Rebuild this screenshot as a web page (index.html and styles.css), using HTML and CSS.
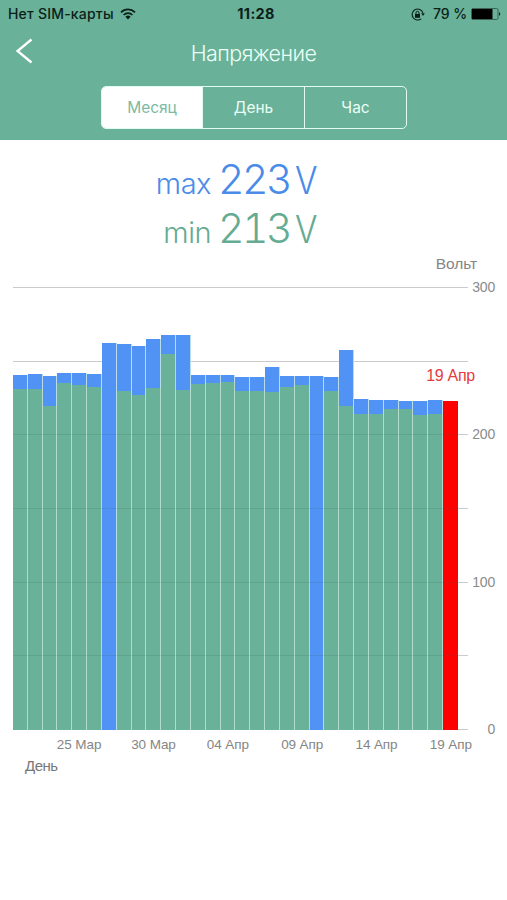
FILE: index.html
```html
<!DOCTYPE html>
<html lang="ru">
<head>
<meta charset="utf-8">
<title>Напряжение</title>
<link rel="stylesheet" href="styles.css">
</head>
<body>
<header class="header">
  <div class="status">
    <div class="carrier"><span>Нет SIM-карты</span>
      <svg width="16" height="12" viewBox="0 0 16 12"><g fill="none" stroke="#0b1f18" stroke-width="1.7"><path d="M1 4.3a10 10 0 0 1 14 0"/><path d="M3.6 7a6.3 6.3 0 0 1 8.8 0"/></g><path d="M5.4 8.7a3.8 3.8 0 0 1 5.2 0L8 11.4z" fill="#0b1f18"/></svg>
    </div>
    <div class="clock">11:28</div>
    <div class="power">
      <svg width="14" height="13" viewBox="0 0 14 13"><path d="M11.9 4.8A5.5 5.5 0 1 0 10.2 10.8" fill="none" stroke="#0b1f18" stroke-width="1.1"/><path d="M10.2 5.2h3.6L12 8z" fill="#0b1f18"/><path d="M4 6h5v3.8H4z" fill="#0b1f18"/><path d="M5 6V4.8a1.5 1.5 0 0 1 3 0V6" fill="none" stroke="#0b1f18"/></svg>
      <span>79 %</span>
      <svg width="31" height="12" viewBox="0 0 31 12"><rect x=".5" y=".5" width="26.5" height="11" rx="1.5" fill="none" stroke="#2c5144" stroke-width=".8"/><path d="M1 1h20.500v10H1z"/><path d="M28.200 4q2 2 0 4z"/></svg>
    </div>
  </div>
  <div class="navbar">
    <svg width="18" height="26" viewBox="0 0 18 26"><path d="M15.500 1.500L1.500 13l14 11.500" fill="none" stroke="#fff" stroke-width="2.300"/></svg>
    <h1 class="title">Напряжение</h1>
  </div>
  <div class="segments">
    <div class="segment active">Месяц</div>
    <div class="segment">День</div>
    <div class="segment">Час</div>
  </div>
</header>
<main>
  <div class="readings">
    <div class="reading max"><span class="name">max</span><span class="value">223</span><span class="unit">V</span></div>
    <div class="reading min"><span class="name">min</span><span class="value">213</span><span class="unit">V</span></div>
  </div>
  <div class="axis-title">Вольт</div>
  <div class="chart">
    <div class="grid"><i></i><i></i><i></i><i></i><i></i><i></i><i></i></div>
    <div class="bars">
      <div class="bar" style="height:355.5px"><b style="height:341px"></b></div>
      <div class="bar" style="height:356px"><b style="height:341px"></b></div>
      <div class="bar" style="height:354px"><b style="height:324px"></b></div>
      <div class="bar" style="height:357.5px"><b style="height:347.5px"></b></div>
      <div class="bar" style="height:357.5px"><b style="height:345px"></b></div>
      <div class="bar" style="height:356px"><b style="height:343.5px"></b></div>
      <div class="bar" style="height:387.5px"></div>
      <div class="bar" style="height:386.5px"><b style="height:339.5px"></b></div>
      <div class="bar" style="height:384px"><b style="height:335.5px"></b></div>
      <div class="bar" style="height:391px"><b style="height:342px"></b></div>
      <div class="bar" style="height:395.5px"><b style="height:376px"></b></div>
      <div class="bar" style="height:395px"><b style="height:340px"></b></div>
      <div class="bar" style="height:355px"><b style="height:346px"></b></div>
      <div class="bar" style="height:355px"><b style="height:347px"></b></div>
      <div class="bar" style="height:355px"><b style="height:348.5px"></b></div>
      <div class="bar" style="height:353px"><b style="height:339px"></b></div>
      <div class="bar" style="height:353px"><b style="height:339.5px"></b></div>
      <div class="bar" style="height:363px"><b style="height:338.5px"></b></div>
      <div class="bar" style="height:354px"><b style="height:343.5px"></b></div>
      <div class="bar" style="height:354px"><b style="height:345px"></b></div>
      <div class="bar" style="height:354.5px"></div>
      <div class="bar" style="height:353.5px"><b style="height:339.5px"></b></div>
      <div class="bar" style="height:380px"><b style="height:324px"></b></div>
      <div class="bar" style="height:331.5px"><b style="height:316px"></b></div>
      <div class="bar" style="height:330.5px"><b style="height:316px"></b></div>
      <div class="bar" style="height:330.5px"><b style="height:321px"></b></div>
      <div class="bar" style="height:329.5px"><b style="height:321px"></b></div>
      <div class="bar" style="height:329.5px"><b style="height:315.5px"></b></div>
      <div class="bar" style="height:330.5px"><b style="height:316.5px"></b></div>
      <div class="bar today" style="height:329px"><span class="flag">19 Апр</span></div>
    </div>
    <div class="grid over"><i></i><i></i><i></i><i></i><i></i><i></i><i></i></div>
    <div class="scale"><span>300</span><span>200</span><span>100</span><span>0</span></div>
  </div>
  <div class="dates"><span>25 Мар</span><span>30 Мар</span><span>04 Апр</span><span>09 Апр</span><span>14 Апр</span><span>19 Апр</span></div>
  <div class="day">День</div>
</main>
</body>
</html>
```

FILE: styles.css
```css
* { box-sizing: border-box; }
body { margin: 0; height: 900px; overflow: hidden; background: #fff; font-family: Inter, "Liberation Sans", sans-serif; }
svg { display: block; flex: none; }
.header { height: 140px; background: #69b199; }
.status { height: 28px; padding: 0 5px 0 8px; display: grid; grid-template-columns: 1fr auto 1fr; align-items: center; color: #0b1f18; font-size: 14px; line-height: 28px; white-space: nowrap; }
.carrier, .power { display: flex; align-items: center; }
.carrier { gap: 6px; letter-spacing: .2px; font-weight: 450; }
.clock { font-weight: 700; font-size: 14.5px; letter-spacing: .3px; padding-left: 2px; }
.power { justify-content: flex-end; gap: 4px; }
.power span { margin-left: 4px; letter-spacing: -.1px; font-weight: 450; }
.navbar { height: 58px; padding: 0 16px; display: grid; grid-template-columns: 18px 1fr 18px; align-items: start; }
.navbar svg { margin-top: 10px; }
.title { margin: 11px 0 0; text-align: center; color: #e9fff6; font-size: 21.5px; line-height: 28px; font-weight: 300; letter-spacing: -.55px; }
.segments { width: 306px; height: 43px; margin-left: 101px; display: grid; grid-template-columns: 100px 102px 1fr; border: 1.5px solid #e1fbf0; border-radius: 5px; overflow: hidden; }
.segment { display: flex; align-items: center; justify-content: center; color: #e9fff6; font-size: 15.5px; }
.segment + .segment { border-left: 1px solid #e1fbf0; }
.segment.active { background: #fff; color: #7db9a3; }
.readings { height: 114px; padding: 15px 0 0 100px; }
.reading { height: 48.5px; display: grid; grid-template-columns: 111px 70px 30px; column-gap: 7px; align-items: baseline; line-height: 48px; font-weight: 300; white-space: nowrap; }
.max { color: #4a8be8; }
.min { color: #65ab93; }
.name { text-align: right; font-size: 29px; letter-spacing: -.5px; }
.value { font-size: 41px; letter-spacing: -2.5px; font-variant-numeric: tabular-nums; }
.unit { font-size: 38px; transform: scaleX(.88); transform-origin: left; }
.axis-title { height: 33px; padding: 0 30px 0 0; text-align: right; color: #858585; font: 15.5px/19px "Liberation Sans", sans-serif; letter-spacing: -.1px; }
.chart { height: 443px; padding-left: 13px; display: grid; grid-template-columns: 445px 10px 1fr; }
.grid { grid-area: 1 / 1 / 2 / 3; display: flex; flex-direction: column; justify-content: space-between; }
.grid i { height: 1px; background: #cbcbcb; }
.grid.over { grid-area: 1 / 1; opacity: .16; z-index: 2; }
.grid.over i { background: #3a6657; }
.grid.over i:nth-child(-n+2), .grid.over i:last-child { background: none; }
.bars { grid-area: 1 / 1; display: grid; grid-template-columns: repeat(30, 1fr); align-items: end; z-index: 1; }
.bar { display: flex; align-items: flex-end; background: #5093f5; background-clip: padding-box; border-right: 1px solid #b5deea; position: relative; }
.bar b { width: 100%; background: #69b199; box-shadow: 1px 0 #b3dccd; }
.bar.today { background: #f00; border: 0; z-index: 3; }
.flag { position: absolute; left: 50%; bottom: 100%; transform: translateX(-50%); margin-bottom: 15px; white-space: nowrap; font: 16px/20px "Liberation Sans", sans-serif; letter-spacing: -.3px; color: #e43c40; }
.scale { grid-area: 1 / 3; padding-right: 12px; margin: -9px 0; display: flex; flex-direction: column; justify-content: space-between; text-align: right; color: #8b8b8b; font: 14px/19px "Liberation Sans", sans-serif; letter-spacing: -.2px; }
.dates { margin: 5px 19px 0 42px; display: grid; grid-template-columns: repeat(6, 1fr); text-align: center; color: #858585; font: 13.5px/20px "Liberation Sans", sans-serif; letter-spacing: -.1px; white-space: nowrap; }
.day { margin-top: 1px; padding-left: 25px; color: #777; font: 15px/20px "Liberation Sans", sans-serif; letter-spacing: -.5px; }
```
